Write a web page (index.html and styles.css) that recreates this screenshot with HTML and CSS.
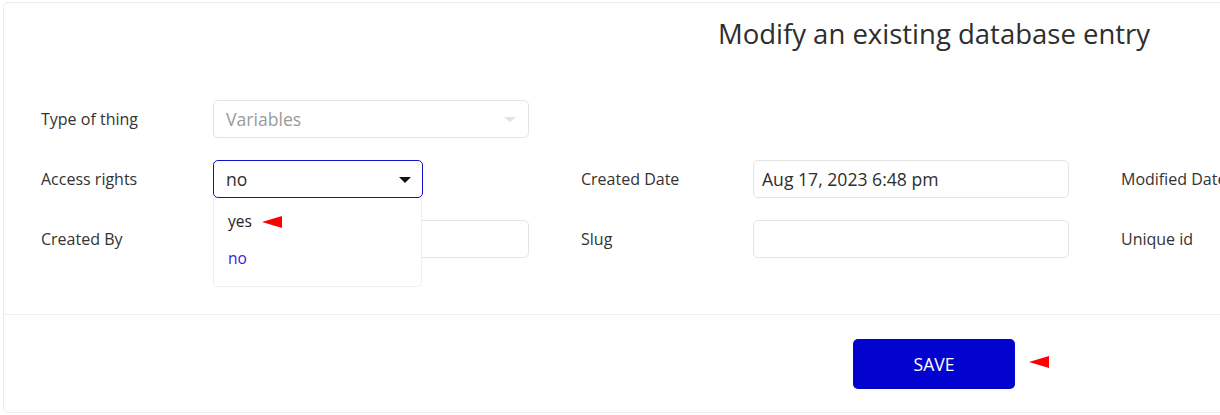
FILE: index.html
```html
<!DOCTYPE html>
<html>
<head>
<meta charset="utf-8">
<link rel="stylesheet" href="styles.css">
</head>
<body>
<div class="page">
  <div class="card">
    <div class="card-head">
      <h1 class="title">Modify an existing database entry</h1>
      <div class="form">
        <div class="field">
          <span class="label">Type of thing</span>
          <div class="control disabled">
            <span class="value">Variables</span>
            <span class="caret caret-light"></span>
          </div>
        </div>
        <div class="field empty"></div>
        <div class="field empty"></div>

        <div class="field">
          <span class="label">Access rights</span>
          <div class="select-wrap">
            <div class="control focused">
              <span class="value dark">no</span>
              <span class="caret caret-dark"></span>
            </div>
            <div class="menu">
              <div class="option">yes <span class="pointer pointer-small"></span></div>
              <div class="option selected">no</div>
            </div>
          </div>
        </div>
        <div class="field">
          <span class="label">Created Date</span>
          <div class="control wide"><span class="value dark">Aug 17, 2023 6:48 pm</span></div>
        </div>
        <div class="field">
          <span class="label">Modified Date</span>
          <div class="control wide"></div>
        </div>

        <div class="field">
          <span class="label">Created By</span>
          <div class="control wide"></div>
        </div>
        <div class="field">
          <span class="label">Slug</span>
          <div class="control wide"></div>
        </div>
        <div class="field">
          <span class="label">Unique id</span>
          <div class="control wide"></div>
        </div>
      </div>
    </div>
    <div class="card-foot">
      <button class="save">SAVE</button>
      <span class="pointer pointer-big"></span>
    </div>
  </div>
</div>
</body>
</html>
```
FILE: styles.css
```css
html, body {
  margin: 0;
  padding: 0;
  background: #ffffff;
  overflow: hidden;
}
body {
  font-family: "Open Sans", "Noto Sans", sans-serif;
  color: #333333;
}
.page {
  padding: 2px 0 0 3px;
}
.card {
  width: 1862px;
  height: 411px;
  box-sizing: border-box;
  border: 1px solid #ececec;
  border-radius: 5px;
  display: flex;
  flex-direction: column;
}
.card-head {
  height: 311px;
  flex: none;
  border-bottom: 1px solid #efefef;
  position: relative;
}
.title {
  margin: 0;
  padding-top: 12px;
  text-align: center;
  font-weight: 400;
  font-size: 27.5px;
  line-height: 38px;
  color: #2e2e2e;
  height: 85px;
  box-sizing: border-box;
}
.form {
  display: grid;
  grid-template-columns: repeat(3, 488px);
  grid-auto-rows: 38px;
  column-gap: 52px;
  row-gap: 22px;
  padding-left: 37px;
  margin-top: 12px;
}
.field {
  display: flex;
  align-items: center;
}
.label {
  width: 172px;
  flex: none;
  font-size: 16px;
  color: #333;
  white-space: nowrap;
  margin-top: -1px;
}
.control {
  box-sizing: border-box;
  height: 38px;
  width: 316px;
  border: 1px solid #e4e4e4;
  border-radius: 5px;
  display: flex;
  align-items: center;
  padding: 0 12px 0 12px;
  position: relative;
  background: #fff;
}
.control.wide {
  padding-left: 8px;
}
.value {
  font-size: 17.6px;
  color: #9a9a9a;
}
.value.dark {
  color: #2e2e2e;
}
.caret {
  position: absolute;
  width: 0;
  height: 0;
  border-left: 6px solid transparent;
  border-right: 6px solid transparent;
  top: 16px;
}
.caret-light {
  right: 12px;
  border-top: 5px solid #e2e2e6;
}
.caret-dark {
  right: 11px;
  border-top: 6px solid #111;
}
.select-wrap {
  position: relative;
  width: 210px;
}
.control.focused {
  width: 210px;
  border-color: #1111cc;
}
.menu {
  position: absolute;
  top: 38px;
  left: 0;
  width: 209px;
  height: 89px;
  box-sizing: border-box;
  border: 1px solid #efefef;
  border-top: none;
  border-radius: 0 0 5px 5px;
  background: #fff;
  z-index: 2;
  padding-top: 12px;
}
.option {
  font-size: 15.5px;
  padding-left: 14px;
  height: 37px;
  line-height: 22px;
  color: #222;
  display: flex;
  align-items: flex-start;
}
.option.selected {
  color: #3a22d6;
}
.pointer {
  display: inline-block;
  width: 0;
  height: 0;
  border-top: 6px solid transparent;
  border-bottom: 6px solid transparent;
  border-right: 20px solid #ff0000;
}
.pointer-small {
  margin-left: 10px;
  margin-top: 6px;
}
.card-foot {
  flex: 1;
  display: flex;
  align-items: center;
  justify-content: center;
  position: relative;
}
.save {
  width: 162px;
  height: 50px;
  border: none;
  border-radius: 5px;
  background: #0303cf;
  color: #fff;
  font-family: "Open Sans", "Noto Sans", sans-serif;
  font-size: 17.5px;
  font-weight: 400;
  padding: 0;
}
.pointer-big {
  position: absolute;
  left: 1025px;
  top: 41px;
}
```
